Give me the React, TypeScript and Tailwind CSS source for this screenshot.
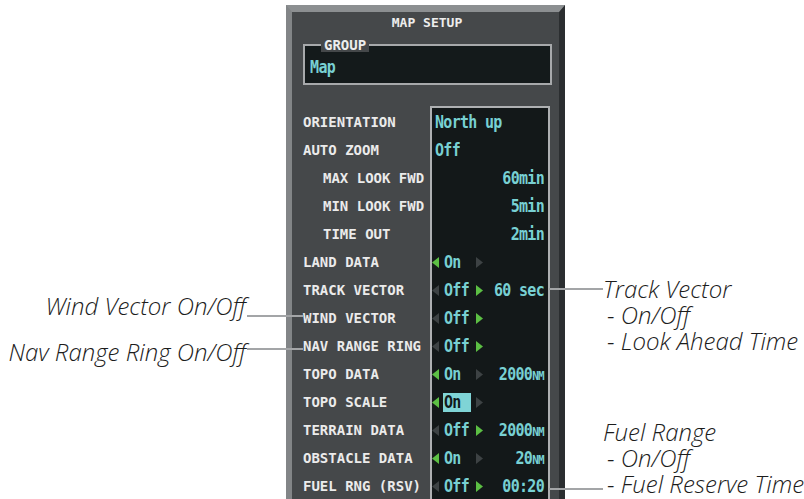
import type { ReactNode } from 'react';

const mono = "font-['DejaVu_Sans_Mono','Liberation_Mono',monospace] font-bold";
const callout =
  "font-['Open_Sans','Liberation_Sans',sans-serif] font-light italic text-[24px] text-[#1c1c1c] whitespace-nowrap";

type Arrow = 'on' | 'off';

type Row = {
  label: string;
  indent?: boolean;
  text?: string; // plain value, no arrows
  alignRight?: boolean;
  l?: Arrow;
  r?: Arrow;
  opt?: string; // text between arrows
  extra?: ReactNode; // right aligned text after the arrows
  hi?: boolean;
};

const nm = (n: string) => (
  <>
    {n}
    <span className="text-[11px]">NM</span>
  </>
);

const rows: Row[] = [
  { label: 'ORIENTATION', text: 'North up' },
  { label: 'AUTO ZOOM', text: 'Off' },
  { label: 'MAX LOOK FWD', indent: true, text: '60min', alignRight: true },
  { label: 'MIN LOOK FWD', indent: true, text: '5min', alignRight: true },
  { label: 'TIME OUT', indent: true, text: '2min', alignRight: true },
  { label: 'LAND DATA', l: 'on', opt: 'On', r: 'off' },
  { label: 'TRACK VECTOR', l: 'off', opt: 'Off', r: 'on', extra: '60 sec' },
  { label: 'WIND VECTOR', l: 'off', opt: 'Off', r: 'on' },
  { label: 'NAV RANGE RING', l: 'off', opt: 'Off', r: 'on' },
  { label: 'TOPO DATA', l: 'on', opt: 'On', r: 'off', extra: nm('2000') },
  { label: 'TOPO SCALE', l: 'on', opt: 'On', r: 'off', hi: true },
  { label: 'TERRAIN DATA', l: 'off', opt: 'Off', r: 'on', extra: nm('2000') },
  { label: 'OBSTACLE DATA', l: 'on', opt: 'On', r: 'off', extra: nm('20') },
  { label: 'FUEL RNG (RSV)', l: 'off', opt: 'Off', r: 'on', extra: '00:20' },
];

function Tri({ dir, state, className = '' }: { dir: 'l' | 'r'; state: Arrow; className?: string }) {
  return (
    <svg width="7" height="11" viewBox="0 0 7 11" className={`shrink-0 ${className}`}>
      <polygon
        points={dir === 'l' ? '7,0 7,11 0,5.5' : '0,0 0,11 7,5.5'}
        fill={state === 'on' ? '#5cbf44' : '#3d4244'}
      />
    </svg>
  );
}

function Value({ row }: { row: Row }) {
  if (!row.l) {
    return (
      <div className={`flex h-[28px] items-center ${row.alignRight ? 'justify-end pr-[4px]' : 'pl-[3px]'}`}>
        <span className="scale-y-115">{row.text}</span>
      </div>
    );
  }
  return (
    <div className="flex h-[28px] items-center">
      <Tri dir="l" state={row.l} />
      <span
        className={`ml-[4px] flex h-[19px] w-[28px] items-center pl-[1px] ${row.hi ? 'bg-[#7fd4d6] text-[#10191a]' : ''}`}
      >
        <span className="scale-y-115">{row.opt}</span>
      </span>
      <Tri dir="r" state={row.r ?? 'off'} className="ml-[5px]" />
      <span className="ml-auto scale-y-115 pr-[4px]">{row.extra}</span>
    </div>
  );
}

function Lead({ className }: { className: string }) {
  return <div className={`relative z-10 h-[2px] shrink-0 bg-[#a3a5a7] ${className}`} />;
}

export default function App() {
  return (
    <div className="flex h-[499px] w-[804px] overflow-hidden bg-white">
      {/* left callouts */}
      <div className="flex w-[286px] shrink-0 flex-col items-end pt-[292px]">
        <div className="flex items-start">
          <span className={`${callout} leading-[28px]`}>Wind Vector On/Off</span>
          <Lead className="-mr-[17px] ml-[1px] mt-[23px] w-[56px]" />
        </div>
        <div className="mt-[18px] flex items-start">
          <span className={`${callout} leading-[28px]`}>Nav Range Ring On/Off</span>
          <Lead className="-mr-[17px] ml-[1px] mt-[10px] w-[56px]" />
        </div>
      </div>

      {/* map setup window */}
      <div className="mt-[5px] h-[520px] w-[279px] shrink-0 border-t-[7px] border-r-[6px] border-l-[6px] border-t-[#8c8f91] border-r-[#2b2e30] border-l-[#828587] bg-[#45484a]">
        <div className={`${mono} flex h-[22px] items-center justify-center pl-[3px] text-[13px] text-[#ededed]`}>
          MAP SETUP
        </div>

        <fieldset className="mt-[4px] mr-[7px] ml-[11px] border-2 border-[#a7a9ab] bg-[#141a1b]">
          <legend className={`${mono} ml-[16px] bg-[#45484a] px-[3px] text-[14px] leading-[14px] text-[#ededed]`}>
            GROUP
          </legend>
          <div className={`${mono} flex h-[31px] items-center pl-[5px] text-[15px] tracking-[-0.6px] text-[#78d0d3]`}>
            <span className="scale-y-115">Map</span>
          </div>
        </fieldset>

        <div className="mt-[21px] flex pl-[11px]">
          <div className={`${mono} w-[127px] pt-[2px] text-[14px] text-[#ebebeb]`}>
            {rows.map((r) => (
              <div key={r.label} className={`flex h-[28px] items-center ${r.indent ? 'pl-[20px]' : ''}`}>
                {r.label}
              </div>
            ))}
          </div>
          <div
            className={`${mono} w-[120px] border-x-2 border-t-2 border-[#aeb0b2] bg-[#131819] text-[15px] tracking-[-0.7px] text-[#78d0d3]`}
          >
            {rows.map((r) => (
              <Value key={r.label} row={r} />
            ))}
          </div>
        </div>
      </div>

      {/* right callouts */}
      <div className="flex min-w-0 flex-1 flex-col pt-[276px]">
        <div className="flex items-start">
          <Lead className="-ml-[16px] mt-[12px] w-[54px]" />
          <div className={`${callout} leading-[26px]`}>
            <div>Track Vector</div>
            <div className="pl-[4px]">- On/Off</div>
            <div className="pl-[4px]">- Look Ahead Time</div>
          </div>
        </div>
        <div className="mt-[65px] flex items-start">
          <Lead className="-ml-[16px] mt-[69px] w-[54px]" />
          <div className={`${callout} leading-[26px]`}>
            <div>Fuel Range</div>
            <div className="pl-[4px]">- On/Off</div>
            <div className="pl-[4px]">- Fuel Reserve Time</div>
          </div>
        </div>
      </div>
    </div>
  );
}
